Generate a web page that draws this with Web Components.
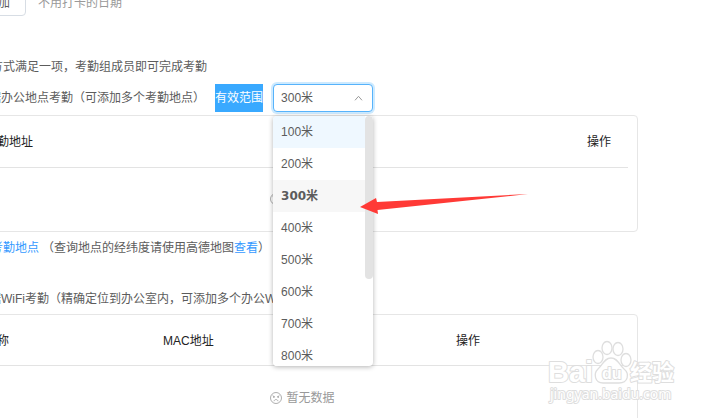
<!DOCTYPE html>
<html lang="zh-CN">
<head>
<meta charset="utf-8">
<title>考勤方式</title>
<style>
html, body { margin: 0; height: 100%; overflow: hidden; background: #fff; }
body { font: 12px/20px "Liberation Sans", "Noto Sans CJK SC", sans-serif; color: #5c5c5c; position: relative; }
</style>
</head>
<body>
<attendance-page></attendance-page>
<pointer-arrow></pointer-arrow>
<site-watermark></site-watermark>
<script>
function define(name, html, setup) {
  const t = document.createElement('template');
  t.innerHTML = html;
  customElements.define(name, class extends HTMLElement {
    constructor() {
      super();
      this.attachShadow({ mode: 'open' }).append(t.content.cloneNode(true));
    }
    connectedCallback() { if (setup) setup(this, this.shadowRoot); }
  });
}

define('action-button', `
<style>
:host { display: block; }
button { display: block; height: 29px; padding: 2px 15px 0; border: 1px solid #d7dde4; border-radius: 4px; background: #fff; font: inherit; color: inherit; }
</style>
<button type="button"><slot></slot></button>`);

define('form-row', `
<style>
:host { display: flex; align-items: center; min-height: 20px; white-space: nowrap; }
</style>
<slot></slot>`);

define('marked-label', `
<style>
:host { display: block; height: 28px; line-height: 28px; background: #39a9ff; color: #fff; }
</style>
<slot></slot>`);

define('text-link', `<style>
:host { display: inline; }
a { color: #3399ff; text-decoration: none; }
</style><a href="#"><slot></slot></a>`);

define('empty-note', `
<style>
:host { display: flex; align-items: center; justify-content: center; gap: 4px; height: 63px; color: #999; }
svg { display: block; }
</style>
<svg width="12" height="12" viewBox="0 0 12 12" fill="none" stroke="#999" stroke-width=".8" aria-hidden="true">
<circle cx="6" cy="6" r="5.5"/>
<path d="M4 9.2C4.5 7 7.500 7 8 9.200"/>
<path d="M2.800 3.400 4 4.600M9.200 3.400 8 4.600"/>
<circle cx="3.900" cy="4.900" r=".5" fill="#999"/><circle cx="8.100" cy="4.900" r=".5" fill="#999"/>
</svg>
<span><slot></slot></span>`);

define('data-card', `
<style>
:host { display: block; border: 1px solid #e6e6e6; border-radius: 4px; padding: 0 9px; }
table { width: 100%; border-collapse: collapse; table-layout: fixed; }
th { height: 51px; padding: 2px 8px 0; text-align: left; font-weight: 400; color: #222; border-bottom: 1px solid #e3e3e3; white-space: nowrap; }
th:first-child { padding-left: 20px; }
td { padding: 0; }
</style>
<table><thead><tr></tr></thead><tbody><tr><td><empty-note>暂无数据</empty-note></td></tr></tbody></table>`,
(host, root) => {
  const row = root.querySelector('thead tr');
  if (row.children.length) return;
  const cols = host.getAttribute('columns').split(',');
  for (const c of cols) {
    const [label, width] = c.split(':');
    const th = document.createElement('th');
    th.scope = 'col';
    th.textContent = label;
    if (width) th.style.width = width;
    th.style.boxSizing = 'border-box';
    row.append(th);
  }
  root.querySelector('td').colSpan = cols.length;
});

define('range-option', `
<style>
:host { display: block; }
button { display: block; width: 100%; height: 32px; padding: 0 8px; border: 0; background: #fff; color: inherit; font: inherit; text-align: left; }
:host([active]) button { background: #eff8ff; }
:host([selected]) button { background: #f7f7f7; font-family: "DejaVu Sans", "Noto Sans CJK SC", sans-serif; font-weight: 700; }
</style>
<button type="button"><slot></slot></button>`);

define('range-select', `
<style>
:host { display: block; position: relative; width: 100px; }
select { display: block; box-sizing: border-box; width: 100%; height: 28px; padding: 0 7px; border: 1px solid #57b3fb; border-radius: 4px; background: #fff; color: inherit; font: inherit; appearance: none; box-shadow: 0 0 0 2px #cdeaff; outline: 0; }
.chevron { position: absolute; right: 10px; top: 11px; }
.menu { position: absolute; z-index: 2; top: 32px; left: 0; right: 0; height: 250px; overflow: hidden; border-radius: 4px; background: #fff; box-shadow: 0 1px 5px rgba(0,0,0,.3); display: flex; align-items: flex-start; }
.list { flex: 1; }
.bar { width: 8px; height: 163px; border-radius: 4px; background: #e3e3e3; }
</style>
<select aria-label="有效范围"><option>300米</option></select>
<svg class="chevron" width="9" height="6" viewBox="0 0 9 6" fill="none" stroke="#999" aria-hidden="true"><path d="M1 5.300 4.500 1.300 8 5.300"/></svg>
<div class="menu">
<div class="list">
<range-option active>100米</range-option><range-option>200米</range-option><range-option selected>300米</range-option><range-option>400米</range-option><range-option>500米</range-option><range-option>600米</range-option><range-option>700米</range-option><range-option>800米</range-option>
</div>
<div class="bar"></div>
</div>`);

define('attendance-page', `
<style>
:host { display: flex; flex-direction: column; margin: -13px 79px 0 -33px; }
.days { gap: 12px; padding-left: 15px; }
.hint { color: #999; padding-top: 2px; }
.ways { margin-top: 41px; padding-left: 24px; }
.place { margin-top: 7px; margin-bottom: 3px; padding-left: 22px; gap: 10px; }
.add { margin-top: 6px; padding-left: 24px; gap: 3px; }
.wifi { margin: 31px 0 5px; padding-left: 22px; }
</style>
<form-row class="days"><action-button>加</action-button><span class="hint">不用打卡的日期</span></form-row>
<form-row class="ways">方式满足一项，考勤组成员即可完成考勤</form-row>
<form-row class="place"><span>据办公地点考勤（可添加多个考勤地点）</span><marked-label>有效范围</marked-label><range-select></range-select></form-row>
<data-card columns="勤地址,操作:49px"></data-card>
<form-row class="add"><text-link>考勤地点</text-link><span>（查询地点的经纬度请使用高德地图<text-link>查看</text-link>）</span></form-row>
<form-row class="wifi">据WiFi考勤（精确定位到办公室内，可添加多个办公W</form-row>
<data-card columns="称:178px,MAC地址,操作:180px"></data-card>`);

define('pointer-arrow', `
<style>
:host { position: absolute; z-index: 3; left: 360px; top: 194px; pointer-events: none; }
svg { display: block; }
</style>
<svg width="169" height="21" viewBox="0 0 169 21" aria-hidden="true"><path d="M0 13 16 4 17 8 168 0 17.500 16 18 20Z" fill="#ff3a36"/></svg>`);

define('site-watermark', `
<style>
:host { position: absolute; z-index: 3; right: 37px; bottom: 10px; pointer-events: none; }
svg { display: block; }
text { font-family: "Liberation Sans", "Noto Sans CJK SC", sans-serif; font-weight: 700; paint-order: stroke; }
.url { font-family: "Noto Sans", sans-serif; font-weight: 400; }
</style>
<svg width="134" height="70" viewBox="0 0 134 70" fill="#fff" stroke="#dedede" stroke-width="2" stroke-linejoin="round">
<text x="2" y="44" font-size="29">Bai</text>
<g stroke-width="1.300"><ellipse cx="52" cy="19" rx="5" ry="6.500"/><ellipse cx="61" cy="10" rx="5" ry="6.500"/><ellipse cx="72" cy="11" rx="5" ry="6.500"/><ellipse cx="80" cy="22" rx="5" ry="6.500"/>
<path d="M65 20C58 20 57 27 52 31C47 36 49 45 57 45H73C82 45 84 36 78 31C73 27 72 20 65 20Z"/></g>
<text x="56" y="41" font-size="16">du</text>
<text x="84" y="42" font-size="22">经验</text>
<text class="url" x="4" y="61" font-size="14">jingyan.baidu.com</text>
</svg>`);
</script>
</body>
</html>
